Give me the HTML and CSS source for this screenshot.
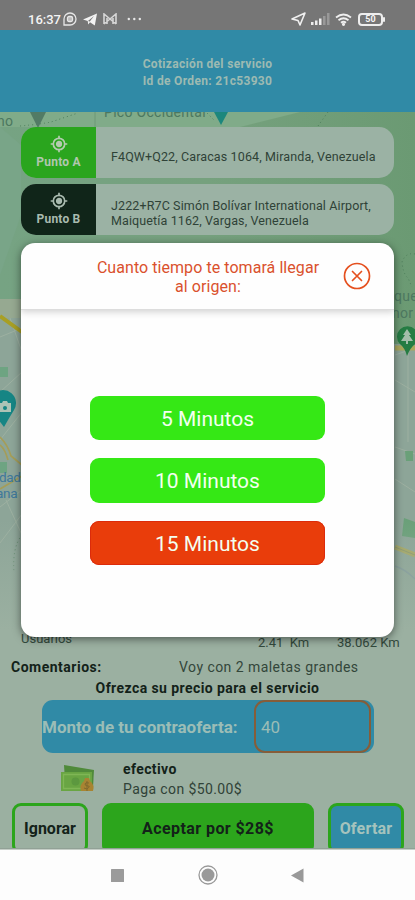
FILE: index.html
```html
<!DOCTYPE html>
<html lang="es">
<head>
<meta charset="utf-8">
<meta name="viewport" content="width=device-width, initial-scale=1">
<title>Cotización del servicio</title>
<link rel="stylesheet" href="styles.css">
</head>
<body>
<div class="app">
  <div class="status">
    <div class="status-left">
      <span class="clock">16:37</span>
      <svg width="14" height="14" viewBox="0 0 14 14" fill="none" stroke="#e6e6e6" stroke-width="1.3"><path d="M1 13V7a6 6 0 1 1 6 6z"/><rect x="4.5" y="4.5" width="5" height="5" rx="1.5" fill="#bbb"/></svg>
      <svg width="14" height="13" viewBox="0 0 14 13" fill="#f2f2f2"><path d="M0 6.500 14 .5 11.800 12.500 7 9.300 5.200 11.500 4.700 8z"/><path d="m5 8 6-5-4.200 5.600z" fill="#777"/></svg>
      <svg width="14" height="12" viewBox="0 0 14 12" fill="none" stroke="#d6d6d6" stroke-width="1.600"><path d="M1 11V1l6 5 6-5v10M4 11V5m6 6V5M1 11l6-5 6 5"/></svg>
      <svg class="dots" width="15" height="4" viewBox="0 0 15 4" fill="#e8e8e8"><circle cx="1.800" cy="2" r="1.200"/><circle cx="7.300" cy="2" r="1.200"/><circle cx="12.800" cy="2" r="1.200"/></svg>
    </div>
    <div class="status-right">
      <svg width="15" height="14" viewBox="0 0 15 14" fill="none" stroke="#f0f0f0" stroke-width="1.600" stroke-linejoin="round"><path d="M1 7 14 1 9 13 7 8.500z"/></svg>
      <svg width="19" height="12" viewBox="0 0 19 12"><path d="M0 9h2.500v3H0zM4 7.500h2.500V12H4zM8 5.500h2.500V12H8z" fill="#eee"/><path d="M12 3h2.500v9H12zM16 0h2.500v12H16z" fill="#999"/></svg>
      <svg width="17" height="13" viewBox="0 0 17 13" fill="none" stroke="#eee" stroke-width="1.800"><path d="M1 4.500q7.500-6 15 0M3.500 7.300q5-4 10 0M6 9.800q2.500-2 5 0"/><circle cx="8.500" cy="11.300" r=".7" fill="#eee"/></svg>
      <span class="battery">50</span>
    </div>
  </div>

  <header class="header">
    <div>Cotización del servicio</div>
    <div>Id de Orden: 21c53930</div>
  </header>

  <main class="content">
    <svg class="map" width="415" height="738" viewBox="0 112 415 738">
      <defs>
        <linearGradient id="land" x1="0" y1="0" x2="1" y2="0"><stop offset="0" stop-color="#76a383"/><stop offset=".5" stop-color="#76a17e"/><stop offset="1" stop-color="#6b9a73"/></linearGradient>
        <linearGradient id="fade" x1="0" y1="0" x2="0" y2="1"><stop offset="0" stop-color="#9bb0a1" stop-opacity="0"/><stop offset="1" stop-color="#9bb0a1"/></linearGradient>
      </defs>
      <rect y="112" width="415" height="738" fill="url(#land)"/>
      <path d="M0 112h300l-60 15H0z" fill="#80ab89"/>
      <path d="M0 127 21 145v70L0 275z" fill="#79a588"/>
      <path d="M0 301l40-2 340 44 35 2v505H0z" fill="#8da598"/>
      <path d="M0 299h40v19H0z" fill="#96a991"/>
      <path d="M0 367h8v10H0zM0 462h7v11H0z" fill="#6ea482"/>
      <path d="M0 337 22 328M0 392 22 372M10 318 22 352M0 440 22 412M0 507 22 490M0 543 22 514M6 500 22 535M395 355l20-7M395 380l20 12M395 447l20 7M395 479l20 13M408 350v92" fill="none" stroke="#9db0a1"/>
      <path d="M0 316 22 332" stroke="#a89f24" stroke-width="4"/>
      <path d="M0 437q8 8 11 19l11 9M0 445q5 4 8 15M0 489l22-13" fill="none" stroke="#a59d58" stroke-width="1.700"/>
      <path d="M395 348h20M395 547l20 8" stroke="#aaa85d" stroke-width="5"/>
      <path d="M395 547l20 8" stroke="#8d9764"/>
      <path d="M395 566q10 3 20 13" fill="none" stroke="#7d959c" stroke-width="1.500"/>
      <path d="M405 451h8v10h-7zM404 518l11 4v16l-13-2z" fill="#6aa079"/>
      <g fill="none" stroke="#4d7e5b" stroke-dasharray="1 3"><path d="M20 126q22-2 31-4l27-9M318 126l10-14M207 113l8 8M415 254q-9-2-13 8 1 12 6 16l4 9M22 535q-10 12-8 38"/></g>
      <path d="M95 112v15" stroke="#6c9876"/>
      <path d="M30 112h16l-8 16z" fill="#527b65"/>
      <path d="M214 112h14l-7 13z" fill="#1c877d"/>
      <path d="M4 427Q-4 417-8 410a13 13 0 1 1 22 0Q9 418 4 427z" fill="#168584"/>
      <path d="M0 403h2l1-2h4l1 2h3v9H0z" fill="#acc3b6"/><circle cx="5" cy="408" r="2" fill="#168584"/>
      <path d="M407 356q-2-8-7-12a10.500 10.500 0 1 1 15 0q-5 4-8 12z" fill="#257c43"/>
      <path d="m407 329 4 6h-2l4 6h-5v3h-2v-3h-5l4-6h-2z" fill="#a3bda9"/>
      <g class="map-label">
        <text x="-3" y="126">no</text><text x="104" y="117">Pico Occidental</text>
        <text x="394" y="301">que</text><text x="392" y="318">nor</text>
      </g>
      <g class="map-place"><text x="-1" y="482">dad</text><text x="-4" y="498">ana</text></g>
      <rect y="520" width="415" height="110" fill="url(#fade)"/>
      <rect y="630" width="415" height="220" fill="#9bb0a1"/>
    </svg>

    <section class="routes">
      <div class="route">
        <div class="tag tag-a">
          <svg width="18" height="18" viewBox="0 0 18 18" fill="none" stroke="#b4cbb0" stroke-width="1.700"><circle cx="9" cy="9" r="5.700"/><circle cx="9" cy="9" r="2.300" fill="#b4cbb0"/><path d="M9 .7v3M9 14.300v3M.7 9h3M14.300 9h3"/></svg>
          <span>Punto A</span>
        </div>
        <div class="address">F4QW+Q22, Caracas 1064, Miranda, Venezuela</div>
      </div>
      <div class="route">
        <div class="tag tag-b">
          <svg width="18" height="18" viewBox="0 0 18 18" fill="none" stroke="#a9bbaf" stroke-width="1.700"><circle cx="9" cy="9" r="5.700"/><circle cx="9" cy="9" r="2.300" fill="#a9bbaf"/><path d="M9 .7v3M9 14.300v3M.7 9h3M14.300 9h3"/></svg>
          <span>Punto B</span>
        </div>
        <div class="address">J222+R7C Simón Bolívar International Airport,<br>Maiquetía 1162, Vargas, Venezuela</div>
      </div>
    </section>

    <section class="order">
      <div class="stats"><span class="users">Usuarios</span><span class="km">2.41&nbsp; Km</span><span class="km2">38.062 Km</span></div>
      <div class="comments"><b>Comentarios:</b><span>Voy con 2 maletas grandes</span></div>
      <div class="offer-title">Ofrezca su precio para el servicio</div>
      <div class="offer"><span class="offer-label">Monto de tu contraoferta:</span><span class="offer-input">40</span></div>
      <div class="payment">
        <svg width="36" height="29" viewBox="0 0 36 29"><path d="m4 1 30 5-1 17-28-6z" fill="#4f8a3a"/><path d="M1 8h31v19H1z" fill="#69a543"/><path d="M3.500 10.500h26v14h-26z" fill="none" stroke="#7fb655" stroke-width="1.300"/><ellipse cx="15.500" cy="17.500" rx="4" ry="4" fill="#5c983f"/><path d="M25 14h4l1 3q5 4 3 10H21q-2-6 3-10z" fill="#a88432"/><path d="M29 19q-4-1-4 1t3 2-1 3l-3-1m3-7v10" stroke="#806a2e" fill="none"/></svg>
        <div class="pay-text"><b>efectivo</b><span>Paga con $50.00$</span></div>
      </div>
      <div class="actions">
        <div class="btn ignore">Ignorar</div><div class="btn accept">Aceptar por $28$</div><div class="btn bid">Ofertar</div>
      </div>
    </section>
  </main>

  <nav class="nav">
    <svg width="13" height="13" viewBox="0 0 13 13"><rect width="13" height="13" rx=".5" fill="#9b9b9b"/></svg>
    <svg width="20" height="20" viewBox="0 0 20 20"><circle cx="10" cy="10" r="9" fill="none" stroke="#999" stroke-width="1.300"/><circle cx="10" cy="10" r="6.500" fill="#999"/></svg>
    <svg width="13" height="15" viewBox="0 0 13 15"><path d="M0 7.500 12.500.5v14z" fill="#999"/></svg>
  </nav>

  <div class="modal">
    <div class="modal-head">
      <h1>Cuanto tiempo te tomará llegar<br>al origen:</h1>
      <svg width="28" height="28" viewBox="0 0 28 28" fill="none" stroke="#e5501f" stroke-width="1.700" stroke-linecap="round"><circle cx="14" cy="14" r="12.500"/><path d="m9.500 9.500 9 9M18.500 9.500l-9 9"/></svg>
    </div>
    <div class="modal-body">
      <div class="choice">5 Minutos</div>
      <div class="choice">10 Minutos</div>
      <div class="choice danger">15 Minutos</div>
    </div>
  </div>
</div>
</body>
</html>
```
FILE: styles.css
```css
* { box-sizing: border-box; }
body { margin: 0; font-family: Roboto, "Liberation Sans", sans-serif; }
svg { display: block; flex: none; }
.app { position: relative; width: 415px; height: 900px; display: flex; flex-direction: column; overflow: hidden; background: #fff; }

.status { height: 30px; background: #767676; display: flex; justify-content: space-between; padding: 8px 30px 0 28px; color: #f4f4f4; }
.status-left, .status-right { display: flex; align-items: center; height: 22px; }
.clock { font-size: 13px; font-weight: 500; width: 35px; }
.status-left svg + svg { margin-left: 6px; }
.status-left .dots.dots { margin-left: 10px; }
.status-right { gap: 5px; padding-right: 2px; }
.battery { position: relative; width: 25px; height: 13px; border: 2px solid #eee; border-radius: 4px; font-size: 9px; line-height: 9px; font-weight: 700; text-align: center; margin-left: 1px; }
.battery::after { content: ""; position: absolute; right: -4px; top: 2px; width: 2px; height: 5px; background: #eee; border-radius: 1px; }

.header { height: 82px; background: #308aa6; padding-top: 26px; text-align: center; color: #9dbab2; font-size: 12px; font-weight: 700; line-height: 17px; letter-spacing: .32px; }

.content { position: relative; height: 737px; flex: none; display: flex; flex-direction: column; overflow: hidden; }
.map { position: absolute; left: 0; top: 0; }
.map-label { font-size: 14px; fill: #4c7860; letter-spacing: .3px; }
.map-place { font-size: 13.500px; fill: #3f789b; letter-spacing: -.3px; }
.routes { position: relative; display: flex; flex-direction: column; gap: 6px; padding: 15px 21px 0; }
.route { display: flex; height: 51px; border-radius: 15px; overflow: hidden; background: #9bb2a4; }
.tag { width: 75px; display: flex; flex-direction: column; align-items: center; padding-top: 8px; color: #b1c7b0; font-size: 12px; line-height: 18px; font-weight: 700; letter-spacing: .2px; }
.tag-a { background: #2aa51e; }
.tag-b { background: #102519; color: #a9bbaf; }
.address { flex: 1; display: flex; align-items: center; padding: 7px 0 0 15px; color: #2f4237; font-size: 12.500px; line-height: 15px; letter-spacing: .12px; white-space: nowrap; }

.order { position: relative; margin-top: auto; height: 219px; color: #132219; }
.stats { height: 26px; display: flex; font-size: 13px; line-height: 18px; color: #334a3d; }
.users { width: 237px; padding-left: 21px; }
.km { width: 79px; padding-top: 4px; padding-left: 21px; }
.km2 { padding-top: 4px; padding-left: 21px; white-space: nowrap; }
.comments { display: flex; height: 22px; font-size: 14px; line-height: 22px; }
.comments b { width: 179px; padding-left: 11px; letter-spacing: .5px; }
.comments span { color: #33463a; letter-spacing: .45px; }
.offer-title { height: 22px; line-height: 20px; text-align: center; font-size: 14px; font-weight: 700; letter-spacing: .42px; }
.offer { margin: 0 42px; height: 53px; width: 332px; border-radius: 11px; background: #308aa6; display: flex; color: #9bbdb6; }
.offer-label { width: 212px; font-size: 17px; font-weight: 700; line-height: 55px; white-space: nowrap; }
.offer-input { width: 117px; height: 53px; border: 2px solid #865d39; border-radius: 11px; font-size: 17px; line-height: 51px; padding-left: 5px; }
.payment { display: flex; height: 50px; padding: 6px 0 0 60px; }
.payment svg { margin-top: 5px; }
.pay-text { display: flex; flex-direction: column; margin-left: 27px; font-size: 14px; line-height: 20px; letter-spacing: .4px; }
.pay-text span { color: #304237; }
.actions { display: flex; height: 46px; overflow: hidden; padding-left: 12px; border-bottom: 1px solid #91a196; }
.btn { height: 51px; border-radius: 9px; display: flex; align-items: center; justify-content: center; font-size: 16px; font-weight: 700; border: 3px solid #2ca51c; flex: none; }
.ignore { width: 76px; }
.accept { width: 212px; margin-left: 14px; background: #2ca51c; letter-spacing: .42px; }
.bid { width: 76px; margin-left: 14px; background: #308aa6; color: #a5c3bd; letter-spacing: .2px; }

.nav { height: 51px; flex: none; background: #fdfdfd; border-top: 1px solid #c5cec7; display: flex; align-items: center; padding-left: 111px; }
.nav svg + svg { margin-left: 74px; }
.nav svg:last-child { margin-left: 73px; }

.modal { position: absolute; left: 21px; top: 243px; width: 373px; height: 394px; background: #fefefe; border-radius: 14px; overflow: hidden; box-shadow: 0 2px 8px rgba(0, 0, 0, .5); }
.modal-head { height: 67px; display: flex; border-bottom: 1px solid #ddd; box-shadow: 0 2px 7px rgba(0, 0, 0, .18); }
.modal-head h1 { margin: 15px 0 0 56px; width: 262px; flex: none; font-size: 16px; font-weight: 400; line-height: 19px; text-align: center; color: #da512d; letter-spacing: .06px; }
.modal-head svg { margin: 19px 0 0 4px; }
.modal-body { display: flex; flex-direction: column; gap: 18px; padding: 85.500px 0 0 69px; }
.choice { width: 235px; height: 44.500px; border-radius: 9px; background: #35e815; color: #f3fff0; font-size: 21px; display: flex; align-items: center; justify-content: center; padding-top: 2px; }
.danger { background: #e93d0b; box-shadow: inset 0 0 0 1px #dc2b0b; }
```
